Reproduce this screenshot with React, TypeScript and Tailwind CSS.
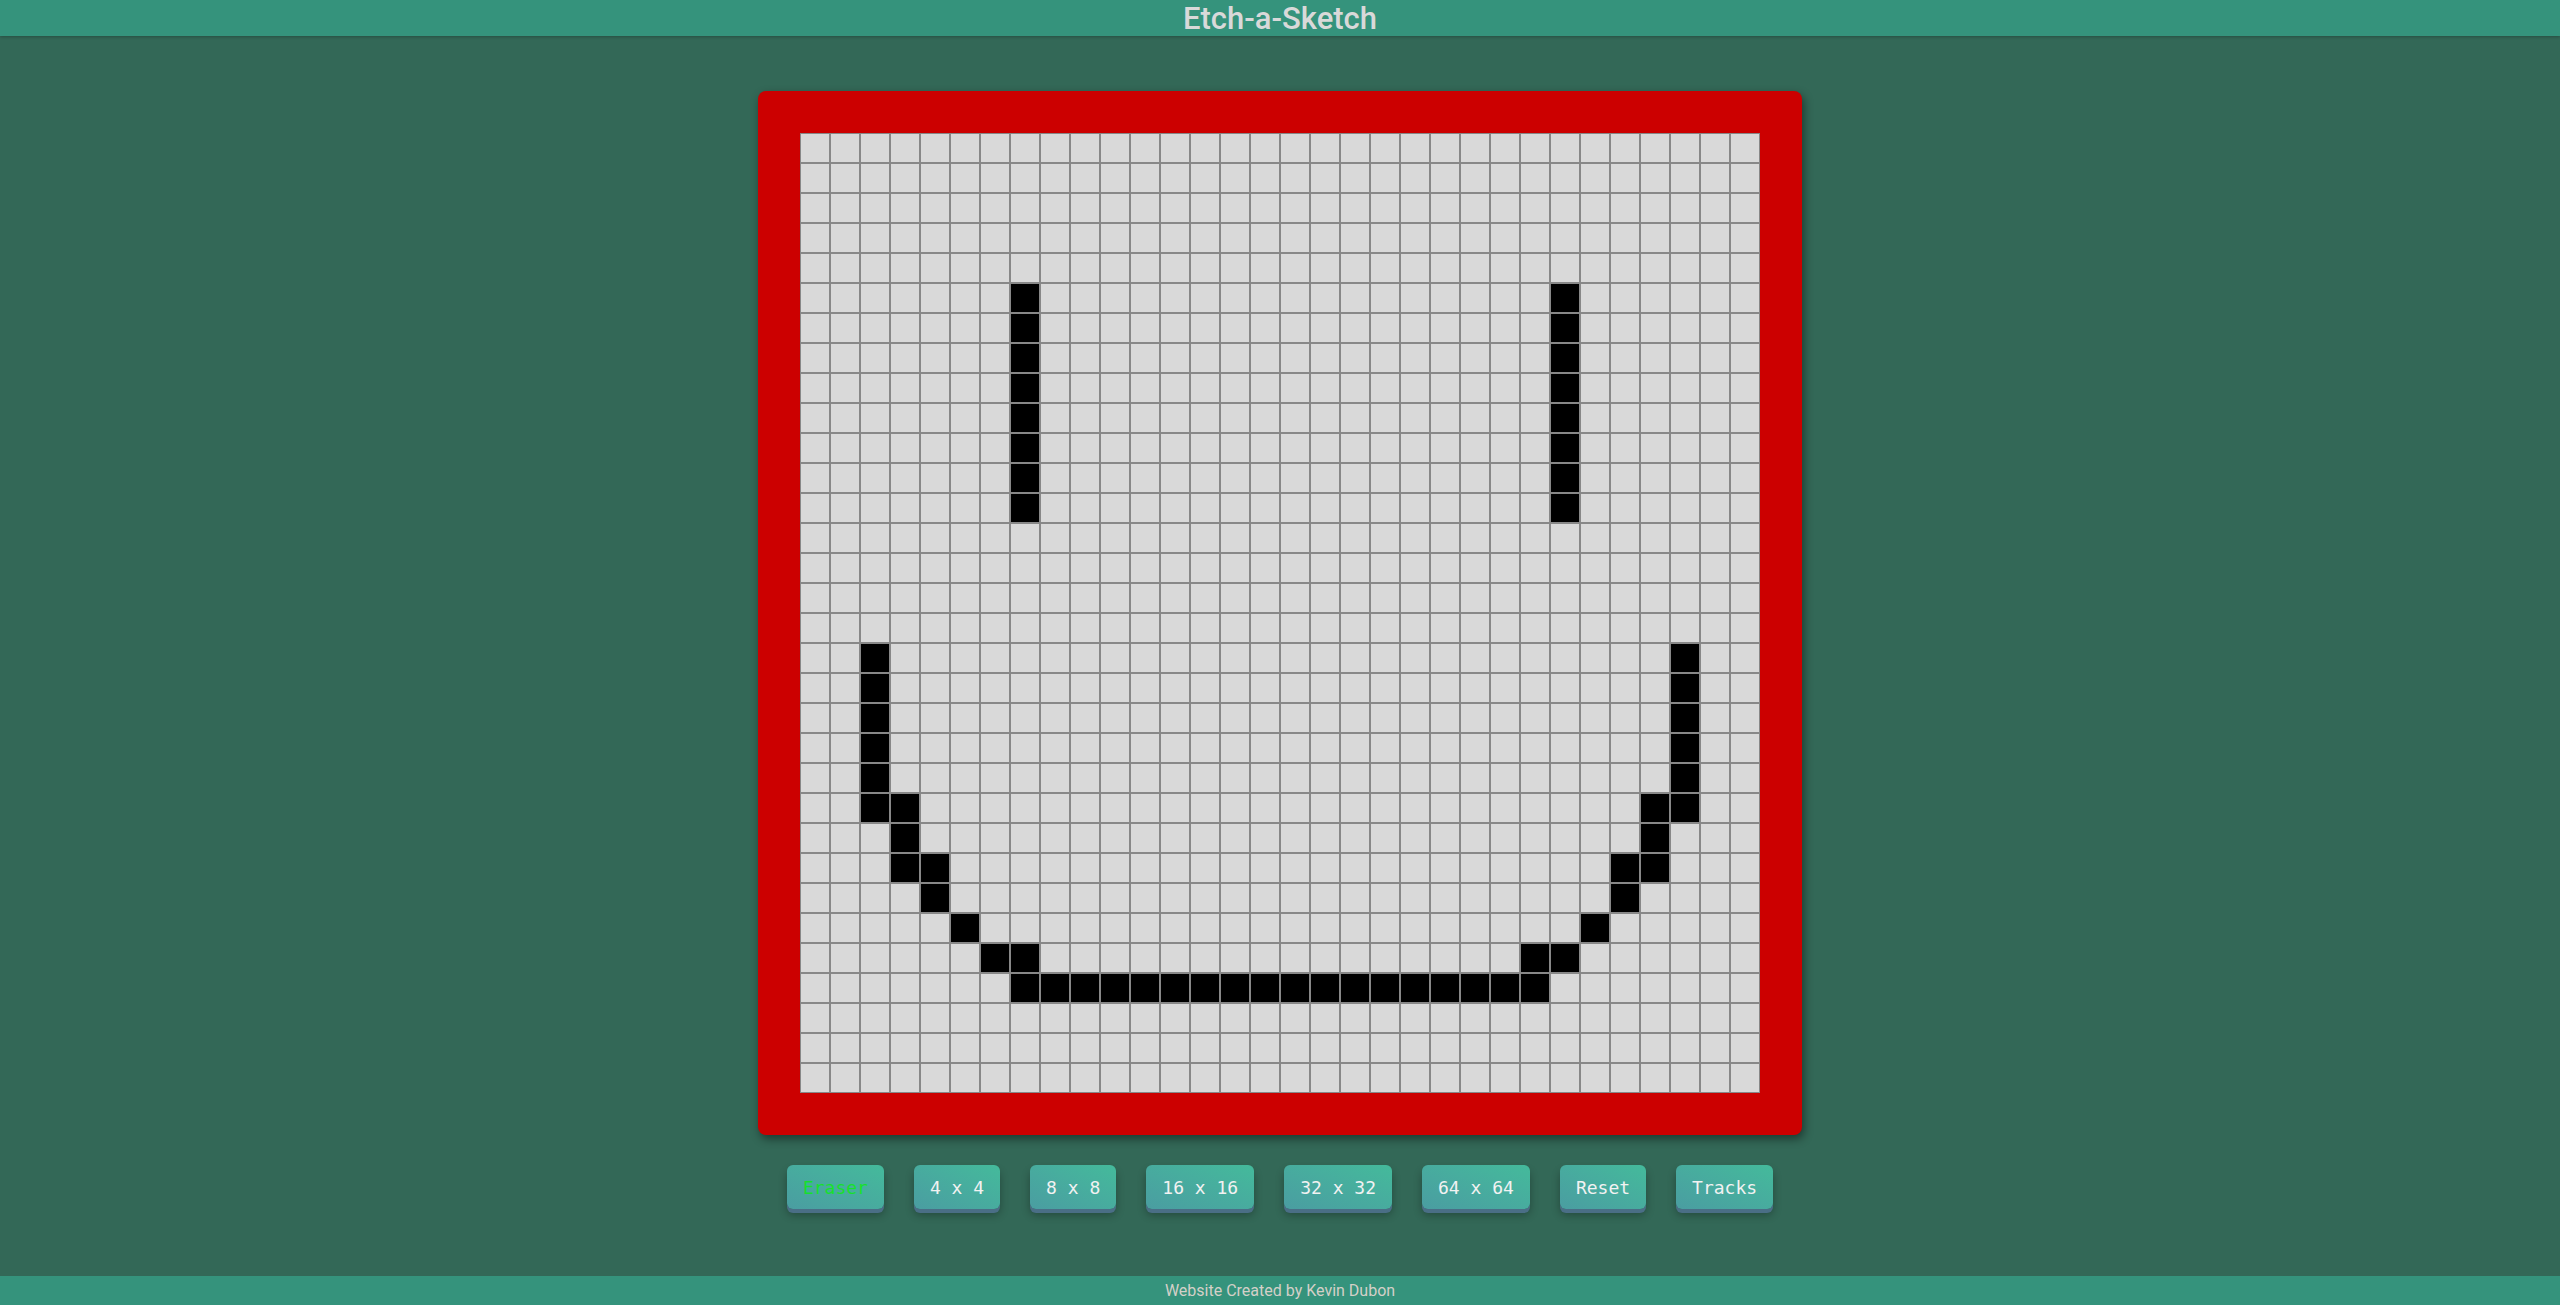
import React from "react";

const SIZE = 32;

// black cells of the smiley, as [row, col]
const inked: [number, number][] = [];
for (let r = 5; r <= 12; r++) {
  inked.push([r, 7], [r, 25]);
}
for (let r = 17; r <= 22; r++) {
  inked.push([r, 2], [r, 29]);
}
inked.push(
  [22, 3], [23, 3], [24, 3], [24, 4], [25, 4], [26, 5], [27, 6], [27, 7],
  [22, 28], [23, 28], [24, 28], [24, 27], [25, 27], [26, 26], [27, 25], [27, 24]
);
for (let c = 7; c <= 24; c++) inked.push([28, c]);

const inkSet = new Set(inked.map(([r, c]) => `${r}-${c}`));

const buttons = ["Eraser", "4 x 4", "8 x 8", "16 x 16", "32 x 32", "64 x 64", "Reset", "Tracks"];

function Grid() {
  const cells = [];
  for (let r = 0; r < SIZE; r++) {
    for (let c = 0; c < SIZE; c++) {
      const on = inkSet.has(`${r}-${c}`);
      cells.push(
        <div
          key={`${r}-${c}`}
          className={`h-[30px] w-[30px] border border-[#888888] ${on ? "bg-black" : "bg-[#d9d9d9]"}`}
        />
      );
    }
  }
  return <div className="grid grid-cols-[repeat(32,30px)]">{cells}</div>;
}

export default function App() {
  return (
    <div className="flex min-h-screen flex-col bg-[#336857] font-['Roboto',sans-serif]">
      <header className="flex h-[36px] items-center justify-center bg-[#35937c] shadow-[0_1px_3px_rgba(0,0,0,0.25)]">
        <h1 className="text-[31px] font-medium leading-none text-[#d9d9d9]">Etch-a-Sketch</h1>
      </header>

      <main className="flex flex-1 flex-col items-center pt-[55px]">
        <div className="rounded-[8px] bg-[#cc0000] p-[42px] shadow-[2px_4px_10px_rgba(0,0,0,0.45)]">
          <Grid />
        </div>

        <div className="mt-[30px] flex gap-[30px]">
          {buttons.map((b) => (
            <button
              key={b}
              className={`h-[44px] rounded-[6px] bg-gradient-to-tr from-[#4a9da1] to-[#44ba9b] px-4 font-['DejaVu_Sans_Mono',monospace] text-[18px] shadow-[0_4px_0_#4a6e86,0_6px_8px_rgba(0,0,0,0.3)] ${
                b === "Eraser" ? "text-[#17e02c]" : "text-[#f2f2f2]"
              }`}
            >
              {b}
            </button>
          ))}
        </div>
      </main>

      <footer className="flex h-[29px] items-center justify-center bg-[#35937c] text-[16px] text-[#d4d0c8]">
        Website Created by Kevin Dubon
      </footer>
    </div>
  );
}
